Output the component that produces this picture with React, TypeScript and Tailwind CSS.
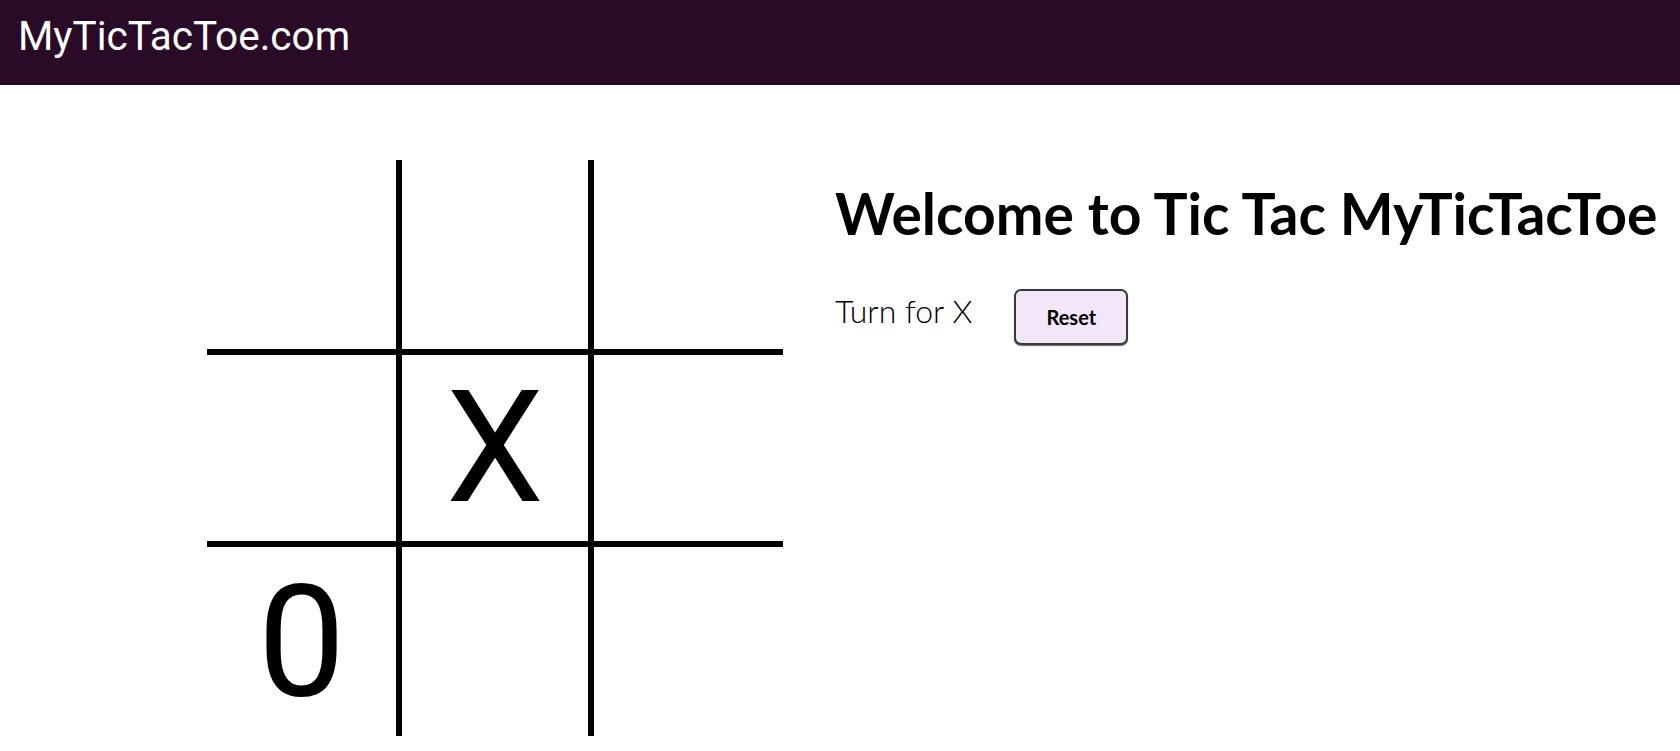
import { useState } from 'react'

type Mark = 'X' | '0' | ''

const rowBorder = ['border-b-[3px]', 'border-y-[3px]', 'border-t-[3px]']
const colBorder = ['border-r-[3px]', 'border-x-[3px]', 'border-l-[3px]']

export default function App() {
  const [cells, setCells] = useState<Mark[]>(['', '', '', '', 'X', '', '0', '', ''])
  const [turn, setTurn] = useState<'X' | '0'>('X')

  const play = (i: number) => {
    if (cells[i]) return
    const next = [...cells]
    next[i] = turn
    setCells(next)
    setTurn(turn === 'X' ? '0' : 'X')
  }

  const reset = () => {
    setCells(['', '', '', '', '', '', '', '', ''])
    setTurn('X')
  }

  return (
    <div className="min-h-screen bg-white">
      <header className="h-[85px] bg-[#290a27] px-[18px] pt-4">
        <span className="text-[40.5px] leading-[40px] text-white font-['Roboto',sans-serif]">MyTicTacToe.com</span>
      </header>

      <main className="flex gap-[52px] pl-[207px] pt-[75px]">
        <div className="grid w-[576px] shrink-0 grid-cols-3">
          {cells.map((c, i) => (
            <div
              key={i}
              onClick={() => play(i)}
              className={`flex h-[192px] w-[192px] items-center justify-center border-black ${rowBorder[Math.floor(i / 3)]} ${colBorder[i % 3]}`}
            >
              <span className="font-['Roboto',sans-serif] text-[156px] leading-none text-black">{c}</span>
            </div>
          ))}
        </div>

        <div className="pt-[21px]">
          <h1 className="font-['Lato',sans-serif] text-[57px] leading-[64px] font-bold text-black whitespace-nowrap">
            Welcome to Tic Tac MyTicTacToe
          </h1>
          <div className="mt-[42px] flex items-center gap-[42px]">
            <span className="mb-[12px] font-['Lato',sans-serif] text-[32px] font-light text-black">Turn for {turn}</span>
            <button
              onClick={reset}
              className="h-[56px] w-[114px] rounded-[7px] border-2 border-[#3a3a3a] bg-[#f3e6f8] font-['Lato',sans-serif] text-[20px] font-bold text-black shadow-[0_1px_1px_rgba(0,0,0,0.6)]"
            >
              Reset
            </button>
          </div>
        </div>
      </main>
    </div>
  )
}
